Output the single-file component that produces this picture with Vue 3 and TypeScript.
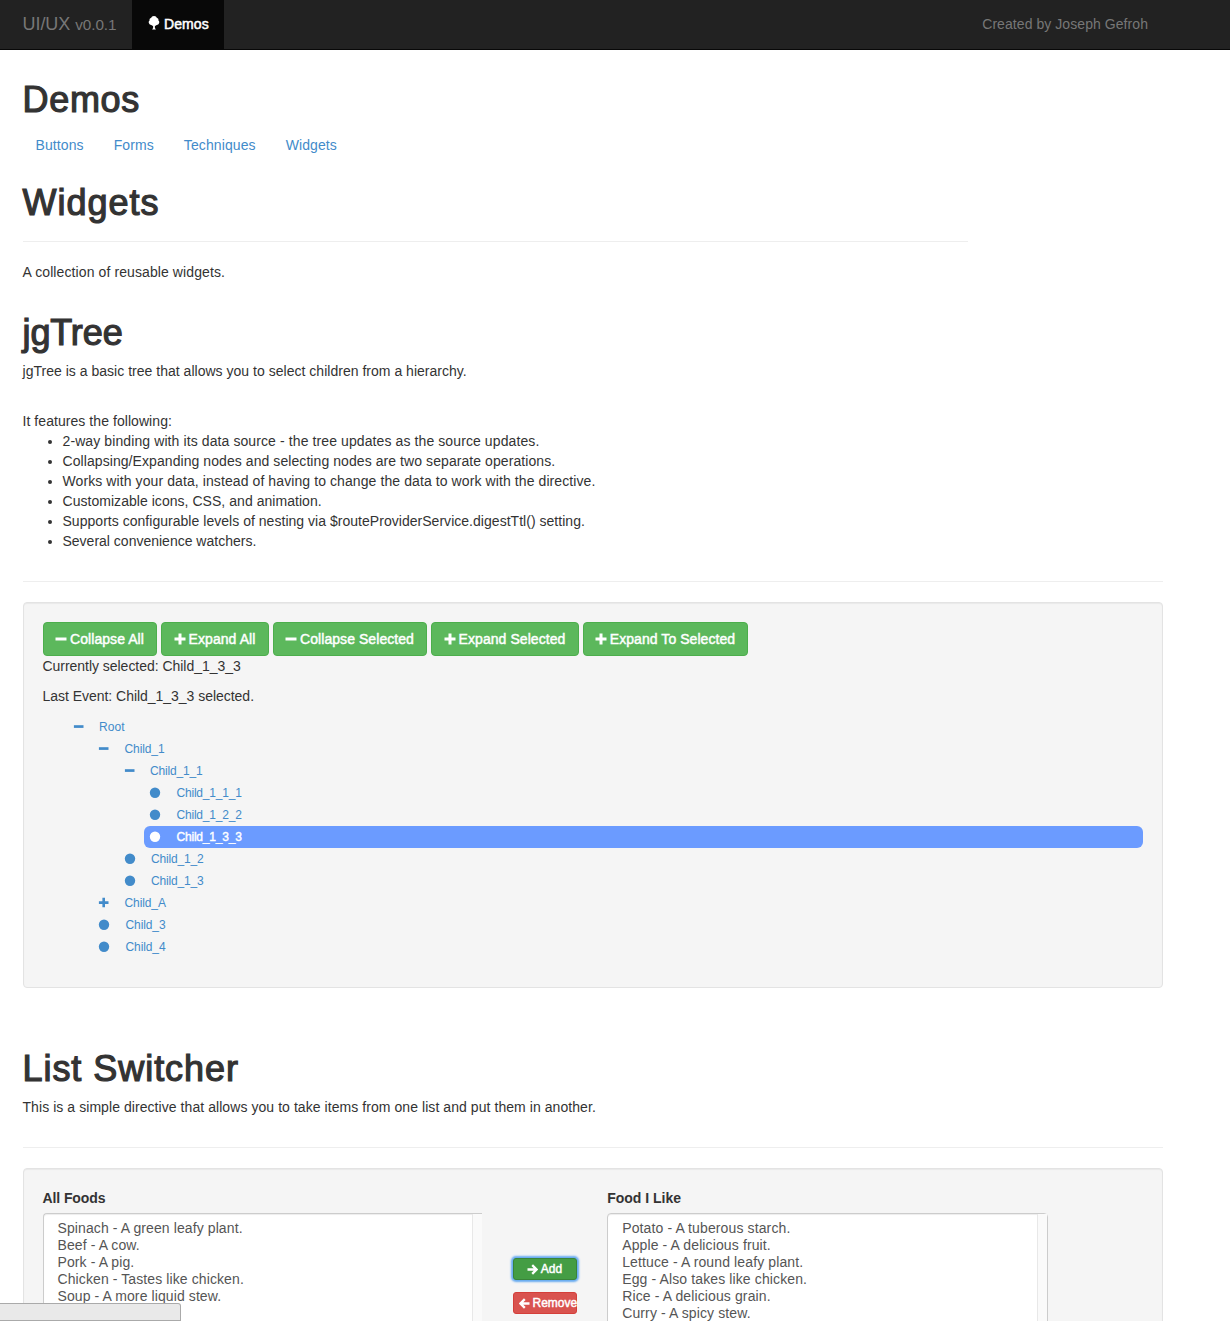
<script setup lang="ts">
interface TreeNode {
  label: string
  level: number
  icon: 'minus' | 'plus' | 'dot'
  selected?: boolean
}

const links = ['Buttons', 'Forms', 'Techniques', 'Widgets']

const features = [
  '2-way binding with its data source - the tree updates as the source updates.',
  'Collapsing/Expanding nodes and selecting nodes are two separate operations.',
  'Works with your data, instead of having to change the data to work with the directive.',
  'Customizable icons, CSS, and animation.',
  'Supports configurable levels of nesting via $routeProviderService.digestTtl() setting.',
  'Several convenience watchers.',
]

const actions = [
  { label: 'Collapse All', icon: 'minus', cls: 'collapse-all' },
  { label: 'Expand All', icon: 'plus', cls: 'expand-all' },
  { label: 'Collapse Selected', icon: 'minus', cls: 'collapse-selected' },
  { label: 'Expand Selected', icon: 'plus', cls: 'expand-selected' },
  { label: 'Expand To Selected', icon: 'plus', cls: 'expand-to' },
]

const nodes: TreeNode[] = [
  { label: 'Root', level: 0, icon: 'minus' },
  { label: 'Child_1', level: 1, icon: 'minus' },
  { label: 'Child_1_1', level: 2, icon: 'minus' },
  { label: 'Child_1_1_1', level: 3, icon: 'dot' },
  { label: 'Child_1_2_2', level: 3, icon: 'dot' },
  { label: 'Child_1_3_3', level: 3, icon: 'dot', selected: true },
  { label: 'Child_1_2', level: 2, icon: 'dot' },
  { label: 'Child_1_3', level: 2, icon: 'dot' },
  { label: 'Child_A', level: 1, icon: 'plus' },
  { label: 'Child_3', level: 1, icon: 'dot' },
  { label: 'Child_4', level: 1, icon: 'dot' },
]

const allFoods = [
  'Spinach - A green leafy plant.',
  'Beef - A cow.',
  'Pork - A pig.',
  'Chicken - Tastes like chicken.',
  'Soup - A more liquid stew.',
]

const likedFoods = [
  'Potato - A tuberous starch.',
  'Apple - A delicious fruit.',
  'Lettuce - A round leafy plant.',
  'Egg - Also takes like chicken.',
  'Rice - A delicious grain.',
  'Curry - A spicy stew.',
]
</script>

<template>
  <div class="page">
    <nav class="navbar">
      <span class="brand">UI/UX <small>v0.0.1</small></span>
      <a class="nav-active">
        <svg class="tree-icon" width="12" height="14" viewBox="0 0 12 14">
          <path d="M6 0C7.500 0 8.600 .9 8.900 2.100C10.100 2.300 10.700 3.300 10.400 4.400C11.300 5 11.600 6.200 11 7.200C10.600 8.500 9.600 9 8.600 8.900C8.100 9.600 7.300 9.900 6.900 9.800V12L7.900 13.600H4.100L5.100 12V9.800C4.700 9.900 3.900 9.600 3.400 8.900C2.400 9 1.400 8.500 1 7.200C.4 6.200 .7 5 1.600 4.400C1.300 3.300 1.900 2.300 3.100 2.100C3.400 .9 4.500 0 6 0Z" fill="#fff" />
        </svg>
        <span>Demos</span>
      </a>
      <span class="credit">Created by Joseph Gefroh</span>
    </nav>

    <main class="content">
      <h1 class="h-demos">Demos</h1>
      <div class="pills">
        <a v-for="l in links" :key="l">{{ l }}</a>
      </div>
      <h1 class="h-widgets">Widgets</h1>
      <hr class="short" />
      <p class="intro">A collection of reusable widgets.</p>

      <h1 class="h-tree">jgTree</h1>
      <p class="tree-desc">jgTree is a basic tree that allows you to select children from a hierarchy.</p>
      <p class="features-title">It features the following:</p>
      <ul class="features">
        <li v-for="(f, i) in features" :key="i" :class="'f' + i">{{ f }}</li>
      </ul>
      <hr class="wide" />

      <section class="well tree-well">
        <div class="actions">
          <button v-for="a in actions" :key="a.label" class="btn" :class="a.cls">
            <svg width="12" height="12" viewBox="0 0 12 12">
              <path :d="a.icon === 'minus' ? 'M.5 4.500h11v3H.5z' : 'M4.500 .5h3v4h4v3h-4v4h-3v-4h-4v-3h4z'" fill="#fff" />
            </svg>
            <span>{{ a.label }}</span>
          </button>
        </div>
        <p class="current">Currently selected: Child_1_3_3</p>
        <p class="event">Last Event: Child_1_3_3 selected.</p>
        <div class="tree">
          <div v-for="n in nodes" :key="n.label" class="node" :class="['level-' + n.level, n.icon, { selected: n.selected }]">
            <svg v-if="n.icon === 'dot'" width="12" height="12" viewBox="0 0 12 12">
              <circle cx="6" cy="5.800" r="5.200" fill="currentColor" />
            </svg>
            <svg v-else width="12" height="12" viewBox="0 0 12 12">
              <path :d="n.icon === 'minus' ? 'M.9 4.200h9.600v2.700H.9z' : 'M4.400 .8H7v3.400h3.500v2.700H7v3.400H4.400V6.900H.9V4.200h3.500z'" fill="currentColor" />
            </svg>
            <span>{{ n.label }}</span>
          </div>
        </div>
      </section>

      <h1 class="h-list">List Switcher</h1>
      <p class="list-desc">This is a simple directive that allows you to take items from one list and put them in another.</p>
      <hr class="wide list-hr" />

      <section class="well switcher">
        <div class="column">
          <label class="l-all">All Foods</label>
          <div class="select clipped">
            <div class="options"><div v-for="f in allFoods" :key="f">{{ f }}</div></div>
            <div class="track"></div>
          </div>
        </div>
        <div class="controls">
          <button class="small-btn add">
            <svg width="11" height="11" viewBox="0 0 11 11"><path d="M0.500 5.500H9M5.200 1.100L9.600 5.500L5.200 9.900" fill="none" stroke="#fff" stroke-width="2.300" /></svg>
            <span>Add</span>
          </button>
          <button class="small-btn remove">
            <svg width="11" height="11" viewBox="0 0 11 11"><path d="M10.500 5.500H2M5.800 1.100L1.400 5.500L5.800 9.900" fill="none" stroke="#fff" stroke-width="2.300" /></svg>
            <span>Remove</span>
          </button>
        </div>
        <div class="column">
          <label class="l-like">Food I Like</label>
          <div class="select liked">
            <div class="options"><div v-for="f in likedFoods" :key="f">{{ f }}</div></div>
            <div class="track"></div>
          </div>
        </div>
      </section>
    </main>
    <div class="status-bubble"></div>
  </div>
</template>

<style>
body {
  margin: 0;
  background: #fff;
}
</style>

<style scoped>
.page {
  position: relative;
  height: 1321px;
  overflow: hidden;
  box-sizing: border-box;
  font: 14px/20px "Helvetica Neue", "Liberation Sans", Arial, sans-serif;
  color: #333;
}
.navbar {
  display: flex;
  height: 49px;
  background: #222;
  border-bottom: 1px solid #080808;
  color: #777;
}
.brand {
  box-sizing: border-box;
  width: 132px;
  padding: 14px 0 0 22.500px;
  font-size: 18px;
  letter-spacing: -.06px;
  white-space: nowrap;
}
.brand small {
  font-size: 15.3px;
}
.nav-active {
  box-sizing: border-box;
  display: flex;
  width: 92px;
  padding: 14px 0 0 16px;
  background: #080808;
  color: #fff;
  letter-spacing: .1px;
  -webkit-text-stroke: .5px #fff;
}
.tree-icon {
  margin: 2px 4.500px 0 -.5px;
  flex: none;
}
.credit {
  margin-left: auto;
  padding: 14px 82px 0 0;
  letter-spacing: .065px;
}
.content {
  margin-left: 22.500px;
  width: 1140px;
}
h1 {
  margin: 0;
  height: 40px;
  font-size: 36px;
  font-weight: 400;
  line-height: 40px;
  -webkit-text-stroke: 1.200px #333;
  white-space: nowrap;
}
.h-demos { margin-top: 30px; letter-spacing: .7px; }
.h-widgets { margin-top: 28px; letter-spacing: 1px; }
.h-tree { margin-top: 31px; letter-spacing: -.1px; }
.h-list { margin-top: 61px; letter-spacing: .95px; }
p {
  margin: 0;
  white-space: nowrap;
}
.pills {
  display: flex;
  gap: 30px;
  margin-top: 15px;
  padding-left: 13px;
  color: #428bca;
  letter-spacing: .1px;
}
hr {
  margin: 0;
  height: 1px;
  border: 0;
  background: #eee;
}
.short {
  width: 945px;
  margin-top: 18px;
}
.intro { margin-top: 20px; letter-spacing: .1px; }
.tree-desc,
.list-desc { margin-top: 8px; }
.tree-desc { letter-spacing: .02px; }
.list-desc { letter-spacing: .064px; }
.features-title { margin-top: 30px; letter-spacing: .06px; }
.features {
  margin: 0 0 30px;
  padding-left: 40px;
}
.features li { white-space: nowrap; }
.f0 { letter-spacing: .1px; }
.f1 { letter-spacing: .073px; }
.f2 { letter-spacing: .092px; }
.f3 { letter-spacing: .04px; }
.f4 { letter-spacing: .03px; }
.well {
  box-sizing: border-box;
  margin-top: 20px;
  padding: 19px;
  border: 1px solid #e3e3e3;
  border-radius: 4px;
  background: #f5f5f5;
  box-shadow: inset 0 1px 1px rgba(0, 0, 0, .05);
}
.tree-well { height: 386px; }
.actions {
  display: flex;
  gap: 4px;
}
button {
  box-sizing: border-box;
  display: flex;
  align-items: center;
  justify-content: center;
  gap: 3px;
  padding: 0;
  margin: 0;
  border: 1px solid #4cae4c;
  border-radius: 4px;
  background: #5cb85c;
  color: #fff;
  font: inherit;
  white-space: nowrap;
  -webkit-text-stroke: .45px #fff;
}
button svg { flex: none; }
.btn { height: 34px; letter-spacing: .06px; }
.collapse-all { width: 114px; }
.expand-all { width: 108px; }
.collapse-selected { width: 154px; }
.expand-selected { width: 148px; }
.expand-to { width: 165px; }
.current { letter-spacing: -.035px; }
.event { margin-top: 10px; letter-spacing: -.03px; }
.tree {
  margin-top: 10px;
  font-size: 12px;
  letter-spacing: -.1px;
}
.node {
  display: flex;
  align-items: center;
  gap: 14.500px;
  height: 22px;
  padding-left: 5px;
  border-radius: 6px;
  color: #428bca;
}
.node.dot { gap: 15.500px; }
.level-0 { margin-left: 25px; letter-spacing: .1px; }
.level-1 { margin-left: 50.500px; }
.level-2 { margin-left: 76px; letter-spacing: -.17px; }
.level-3 { margin-left: 101.500px; letter-spacing: -.2px; }
.selected {
  background: #6b9bff;
  color: #fff;
  -webkit-text-stroke: .4px #fff;
}
.list-hr { margin-top: 30px; }
.switcher {
  display: flex;
  height: 400px;
}
.column { width: 440px; }
label {
  display: block;
  font-weight: 700;
}
.l-all { letter-spacing: -.1px; }
.select {
  box-sizing: border-box;
  display: flex;
  height: 200px;
  margin-top: 5px;
  border: 1px solid #ccc;
  border-radius: 4px;
  background: #fff;
  box-shadow: inset 0 1px 1px rgba(0, 0, 0, .075);
  color: #555;
  line-height: 17px;
}
.clipped {
  width: 439px;
  border-right: 0;
  border-top-right-radius: 0;
  letter-spacing: .1px;
}
.liked {
  width: 440.500px;
  letter-spacing: .12px;
}
.options {
  flex: 1;
  padding: 6px 14px;
}
.track {
  box-sizing: border-box;
  width: 10px;
  border-left: 1px solid #e8e8e8;
  background: #fafafa;
}
.controls {
  width: 64px;
  margin: 70px 30.700px 0 30px;
}
.small-btn {
  width: 64px;
  height: 22px;
  border-radius: 3px;
  font-size: 12px;
}
.add {
  border-color: #398439;
  background: #449d44;
  box-shadow: 0 0 2px 2px #66aaf0;
}
.remove {
  justify-content: flex-start;
  margin-top: 12px;
  padding-left: 5px;
  border-color: #d43f3a;
  background: #d9534f;
}
.status-bubble {
  position: absolute;
  left: 0;
  bottom: 0;
  box-sizing: border-box;
  width: 181px;
  height: 18px;
  border: 1px solid #aaa;
  border-left: 0;
  border-top-right-radius: 3px;
  background: #e9e9e9;
}
</style>
